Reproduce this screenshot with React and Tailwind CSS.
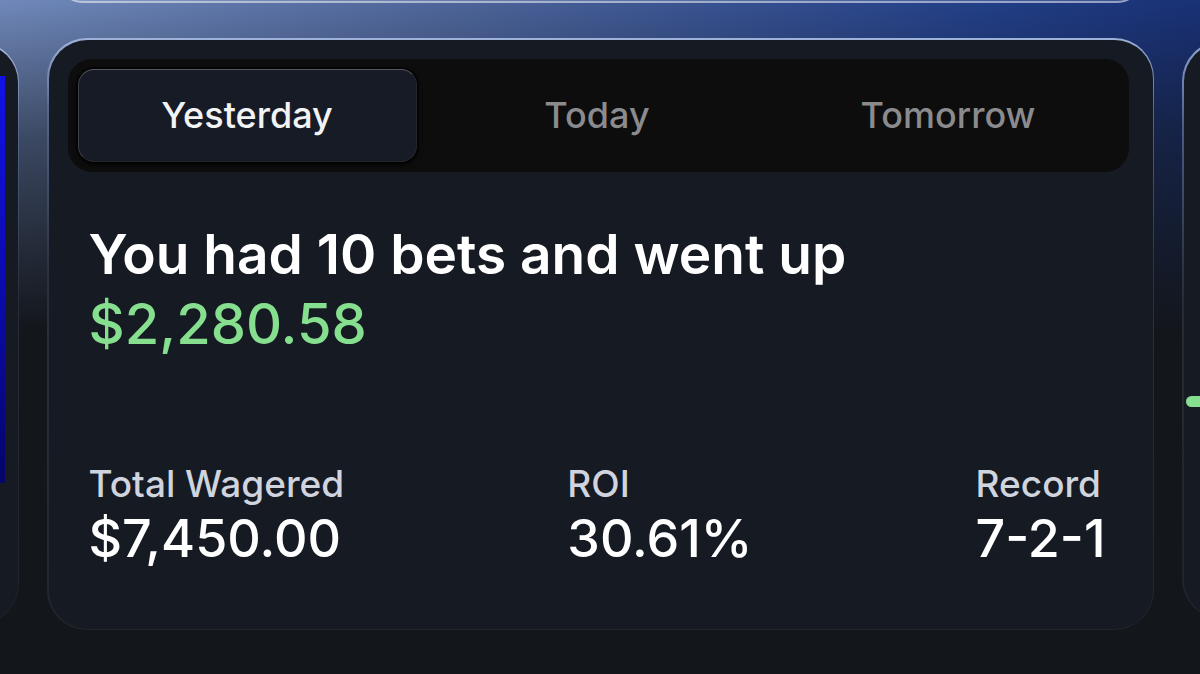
export default function App() {
  const font = { fontFamily: 'Inter, "Noto Sans", sans-serif' };
  return (
    <div
      className="w-[1200px] h-[674px] overflow-hidden bg-[#13161b] bg-[linear-gradient(180deg,rgba(19,22,27,0)_0px,rgba(19,22,27,0.55)_140px,#13161b_330px),linear-gradient(100deg,#7089bb_0%,#4d659a_35%,#223f88_75%,#14296c_100%)]"
      style={font}
    >
      {/* card above, cut off */}
      <div className="ml-[60px] w-[1080px] h-[40px] -mt-[37px] rounded-b-[22px] bg-white/15 border-b-[2px] border-x-[2px] border-white/45" />

      <div className="flex items-start gap-[28px] mt-[35px] -ml-[281px]">
        {/* left partial card */}
        <div className="shrink-0 w-[300px] h-[582px] mt-[4px] rounded-[40px] p-[1.5px] bg-[linear-gradient(180deg,#a9bbdf_0%,#55678e_15%,#262b36_45%,#1f232a_100%)]">
          <div className="h-full rounded-[38.5px] bg-[#161a23] flex justify-end pr-[13px] pt-[32px]">
            <div className="w-[60px] h-[407px] bg-[linear-gradient(180deg,#1212e6_0%,#0b0bb0_50%,#04046a_100%)]" />
          </div>
        </div>

        {/* main card */}
        <div className="shrink-0 w-[1107px] h-[592px] rounded-[40px] p-[1.5px] bg-[linear-gradient(180deg,#9fb2da_0%,#56678d_12%,#2a303c_40%,#22262d_100%)]">
          <div className="h-full rounded-[38.5px] bg-[#161a23] flex flex-col pl-[19px] pr-[24px] pt-[19px]">
            {/* tabs */}
            <div className="h-[113px] rounded-[24px] bg-[#0d0d0e] p-[10px] flex">
              <div className="w-[339px] shrink-0 rounded-[16px] bg-[#171b25] border border-[#24272e] border-t-[#55585e] border-l-[#3e4147] shadow-[0_0_0_2px_rgba(0,0,0,0.5),0_3px_5px_rgba(0,0,0,0.7)] flex items-center justify-center text-[36px] font-medium text-[#f2f3f5]">
                Yesterday
              </div>
              <div className="flex-1 flex items-center justify-center pl-[10px] text-[36px] font-medium text-[#8b8b8d]">
                Today
              </div>
              <div className="flex-1 flex items-center justify-center pl-[10px] text-[36px] font-medium text-[#8b8b8d]">
                Tomorrow
              </div>
            </div>

            {/* headline */}
            <div className="mt-[47px] pl-[21px]">
              <div className="text-[55px] leading-[70px] font-semibold text-white">
                You had 10 bets and went up
              </div>
              <div className="text-[56px] leading-[70px] font-medium text-[#86df8e]">
                $2,280.58
              </div>
            </div>

            {/* stats */}
            <div className="mt-[103px] pl-[21px] pr-[23px] flex justify-between">
              <div className="flex flex-col">
                <div className="text-[37px] leading-[44px] font-medium text-[#cfd4de]">Total Wagered</div>
                <div className="mt-[5px] text-[52px] leading-[56px] font-medium text-white">$7,450.00</div>
              </div>
              <div className="flex flex-col">
                <div className="text-[37px] leading-[44px] font-medium text-[#cfd4de]">ROI</div>
                <div className="mt-[5px] text-[52px] leading-[56px] font-medium text-white">30.61%</div>
              </div>
              <div className="flex flex-col">
                <div className="text-[37px] leading-[44px] font-medium text-[#cfd4de]">Record</div>
                <div className="mt-[5px] text-[52px] leading-[56px] font-medium text-white">7-2-1</div>
              </div>
            </div>
          </div>
        </div>

        {/* right partial card */}
        <div className="shrink-0 w-[300px] h-[578px] mt-[3px] rounded-[40px] p-[1.5px] bg-[linear-gradient(180deg,#8ea3cf_0%,#4a5c86_15%,#262b36_45%,#1f232a_100%)]">
          <div className="h-full rounded-[38.5px] bg-[#161a23] pl-[2px] pt-[353px]">
            <div className="w-[80px] h-[11px] rounded-full bg-[#86df8e]" />
          </div>
        </div>
      </div>
    </div>
  );
}
